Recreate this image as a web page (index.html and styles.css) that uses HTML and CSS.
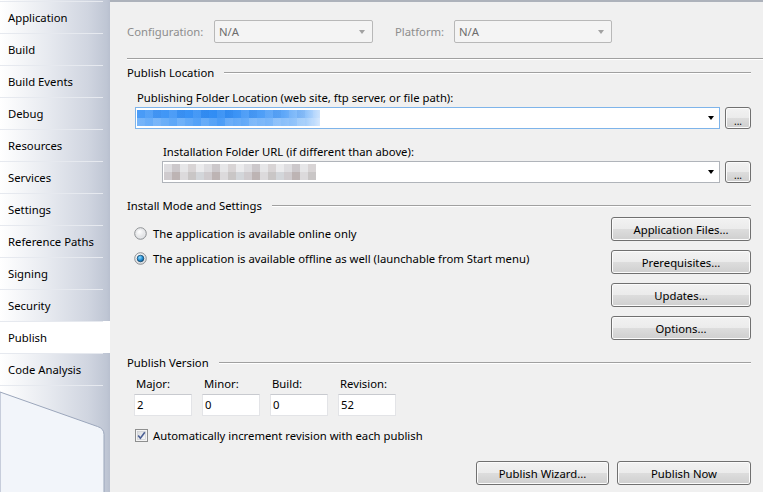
FILE: index.html
```html
<!DOCTYPE html>
<html>
<head>
<meta charset="utf-8">
<link rel="stylesheet" href="styles.css">
</head>
<body>
<div class="window">
  <nav class="sidebar">
    <div class="tab">Application</div>
    <div class="tab">Build</div>
    <div class="tab">Build Events</div>
    <div class="tab">Debug</div>
    <div class="tab">Resources</div>
    <div class="tab">Services</div>
    <div class="tab">Settings</div>
    <div class="tab">Reference Paths</div>
    <div class="tab">Signing</div>
    <div class="tab">Security</div>
    <div class="tab active">Publish</div>
    <div class="tab">Code Analysis</div>
    <div class="sidebar-foot">
      <svg class="foot-svg" width="110" height="120" viewBox="0 0 110 120">
        <path d="M0 6 L97.5 40.5 Q104 42.5 104 48.5 L104 120 L0 120 Z" fill="#f2f5fa" stroke="#9ba6bb" stroke-width="1"/>
      </svg>
    </div>
  </nav>

  <main class="content">
    <div class="config-row">
      <span class="dis-label cfg-label">Configuration:</span>
      <div class="combo disabled w159"><span>N/A</span><i class="arrow gray"></i></div>
      <span class="dis-label plat-label">Platform:</span>
      <div class="combo disabled w158"><span>N/A</span><i class="arrow gray"></i></div>
    </div>
    <div class="rule full"></div>

    <div class="group-head"><span>Publish Location</span><i class="head-line"></i></div>
    <div class="label l1">Publishing Folder Location (web site, ftp server, or file path):</div>
    <div class="combo-row r1">
      <div class="combo edit focus">
        <div class="blur-blue"><i class="bb-top"></i><i class="bb-bot"></i></div>
        <i class="arrow"></i>
      </div>
      <button class="btn dots">...</button>
    </div>
    <div class="label l2">Installation Folder URL (if different than above):</div>
    <div class="combo-row r2">
      <div class="combo edit">
        <div class="blur-gray"><i class="bg-top"></i><i class="bg-bot"></i></div>
        <i class="arrow"></i>
      </div>
      <button class="btn dots">...</button>
    </div>

    <div class="group-head h2"><span>Install Mode and Settings</span><i class="head-line"></i></div>
    <div class="install">
      <div class="radios">
        <label class="radio r-a">
          <svg width="13" height="13" viewBox="0 0 13 13"><defs><radialGradient id="rg1" cx="0.4" cy="0.35" r="0.7"><stop offset="0" stop-color="#ffffff"/><stop offset="1" stop-color="#d4d6d9"/></radialGradient></defs><circle cx="6.5" cy="6.5" r="5.8" fill="url(#rg1)" stroke="#8e9194" stroke-width="1"/><circle cx="6.5" cy="6.5" r="4.2" fill="none" stroke="#e9eaec" stroke-width="1"/></svg>
          <span>The application is available online only</span>
        </label>
        <label class="radio r-b">
          <svg width="13" height="13" viewBox="0 0 13 13"><defs><radialGradient id="rg2" cx="0.4" cy="0.35" r="0.7"><stop offset="0" stop-color="#ffffff"/><stop offset="1" stop-color="#d4d6d9"/></radialGradient><radialGradient id="dot" cx="0.4" cy="0.35" r="0.7"><stop offset="0" stop-color="#8fdcff"/><stop offset="0.6" stop-color="#1f8ad2"/><stop offset="1" stop-color="#0e4d7c"/></radialGradient></defs><circle cx="6.5" cy="6.5" r="5.8" fill="url(#rg2)" stroke="#8e9194" stroke-width="1"/><circle cx="6.5" cy="6.5" r="3.3" fill="url(#dot)" stroke="#174a6d" stroke-width="0.8"/></svg>
          <span>The application is available offline as well (launchable from Start menu)</span>
        </label>
      </div>
      <div class="side-buttons">
        <button class="btn big">Application Files...</button>
        <button class="btn big">Prerequisites...</button>
        <button class="btn big">Updates...</button>
        <button class="btn big">Options...</button>
      </div>
    </div>

    <div class="group-head h3"><span>Publish Version</span><i class="head-line"></i></div>
    <div class="version">
      <div class="vfield"><div class="vlabel">Major:</div><div class="tbox">2</div></div>
      <div class="vfield"><div class="vlabel">Minor:</div><div class="tbox">0</div></div>
      <div class="vfield"><div class="vlabel">Build:</div><div class="tbox">0</div></div>
      <div class="vfield"><div class="vlabel">Revision:</div><div class="tbox">52</div></div>
    </div>
    <label class="check">
      <svg width="13" height="13" viewBox="0 0 13 13"><defs><linearGradient id="cg" x1="0" y1="0" x2="1" y2="1"><stop offset="0" stop-color="#d8dbde"/><stop offset="1" stop-color="#f9f9fa"/></linearGradient></defs><rect x="0.5" y="0.5" width="12" height="12" fill="#f4f4f4" stroke="#8e8f8f"/><rect x="2.5" y="2.5" width="8" height="8" fill="url(#cg)" stroke="#c6c9cd" stroke-width="0.6"/><path d="M3.2 6.4 L5.4 9.2 L9.8 3.2" fill="none" stroke="#4b5f94" stroke-width="1.6"/></svg>
      <span>Automatically increment revision with each publish</span>
    </label>

    <div class="bottom-buttons">
      <button class="btn wide w-wiz">Publish Wizard...</button>
      <button class="btn wide w-now">Publish Now</button>
    </div>
  </main>
</div>
</body>
</html>
```

FILE: styles.css
```css
* { box-sizing: border-box; }
html, body { margin: 0; padding: 0; }
body {
  width: 763px;
  height: 492px;
  overflow: hidden;
  font-family: "Noto Sans", "Open Sans", sans-serif;
  font-size: 11.3px;
  color: #000;
  background: #f0f0f0;
}
.window {
  display: flex;
  width: 763px;
  height: 492px;
}

/* ---------- sidebar ---------- */
.sidebar {
  width: 110px;
  flex: 0 0 110px;
  display: flex;
  flex-direction: column;
  padding-top: 1px;
  background: linear-gradient(to right, #ffffff 0%, #e6e9ef 45%, #d0d5e0 80%, #bfc6d4 97%, #b9c0cf 100%);
}
.tab {
  height: 32px;
  padding: 1px 0 0 8px;
  line-height: 31px;
  color: #000;
  background: linear-gradient(#e6e9ef, #e6e9ef) 0 0 / 103px 1px no-repeat;
  white-space: nowrap;
}
.tab.active {
  background: linear-gradient(#e6e9ef, #e6e9ef) 0 0 / 103px 1px no-repeat, #ffffff;
}
.sidebar-foot {
  flex: 1;
  background: linear-gradient(#e6e9ef, #e6e9ef) 0 0 / 103px 1px no-repeat;
  overflow: hidden;
}
.foot-svg { display: block; margin-top: 1px; }

/* ---------- content ---------- */
.content {
  flex: 1;
  border-top: 2px solid #adb2bb;
  padding: 0 12px 0 17px;
  background: #f0f0f0;
  min-width: 0;
}
.config-row {
  display: flex;
  align-items: center;
  height: 23px;
  margin-top: 18px;
}
.dis-label { color: #8d8d8d; }
.cfg-label { width: 87px; }
.plat-label { margin-left: 22px; width: 59px; }
.combo {
  display: flex;
  align-items: center;
  height: 23px;
  border: 1px solid #adadad;
  border-radius: 2px;
  background: #fff;
  padding-left: 4px;
}
.combo.disabled {
  background: #f4f4f4;
  border-color: #b8b8b8;
  color: #6d6d6d;
}
.w159 { width: 159px; }
.w158 { width: 158px; }
.arrow {
  margin-left: auto;
  margin-right: 5px;
  width: 0;
  height: 0;
  border-left: 3.5px solid transparent;
  border-right: 3.5px solid transparent;
  border-top: 4px solid #000;
}
.arrow.gray { border-top-color: #a2a2a2; margin-right: 7px; }

.rule {
  height: 2px;
  border-top: 1px solid #a0a0a0;
  border-bottom: 1px solid #ffffff;
}
.rule.full { margin: 15px -12px 0 0; }

.group-head {
  display: flex;
  align-items: center;
  height: 16px;
  line-height: 16px;
  margin-top: 5px;
}
.head-line {
  flex: 1;
  height: 2px;
  margin-left: 10px;
  border-top: 1px solid #a0a0a0;
  border-bottom: 1px solid #ffffff;
}
.label { height: 16px; line-height: 16px; }
.l1 { margin: 9px 0 0 10px; }
.l2 { margin: 15px 0 0 36px; }

.combo-row {
  display: flex;
  align-items: center;
  margin-top: 1px;
  gap: 5px;
  height: 22px;
}
.r1 { margin-left: 8px; }
.r2 { margin-left: 35px; }
.combo.edit {
  flex: 1;
  height: 22px;
  border-radius: 0;
  border-color: #b0b4ba;
  padding-left: 1px;
}
.combo.edit.focus { border-color: #7eb4ea; }
.btn {
  font-family: inherit;
  font-size: 11.3px;
  color: #000;
  border: 1px solid #707070;
  border-radius: 3px;
  background: linear-gradient(#f2f2f2 0%, #ebebeb 50%, #dddddd 50%, #cfcfcf 100%);
  box-shadow: inset 0 0 0 1px #fbfbfb;
  padding: 0;
  margin: 0;
}
.btn.dots {
  width: 26px;
  height: 22px;
  line-height: 20px;
  padding-top: 3px;
  font-size: 10px;
}

.blur-blue {
  display: flex;
  flex-direction: column;
  width: 183px;
  height: 16px;
}
.blur-blue i { flex: 1; display: block; }
.bb-top {
  background:
    repeating-linear-gradient(to right, rgba(255,255,255,0) 0 8px, rgba(255,255,255,0.08) 8px 16px, rgba(0,60,160,0.05) 16px 24px),
    linear-gradient(to right, #4b9cf7 0%, #3e95f6 20%, #2f8cf4 45%, #4a9cf7 65%, #5ea7f8 80%, #8ec2fb 92%, #c8e0fd 100%);
}
.bb-bot {
  background:
    repeating-linear-gradient(to right, rgba(255,255,255,0.06) 0 8px, rgba(255,255,255,0) 8px 16px, rgba(255,255,255,0.12) 16px 24px),
    linear-gradient(to right, #6eb0f9 0%, #5aa6f8 25%, #4a9cf7 45%, #6fb1f9 65%, #84bcfa 80%, #9ecbfb 92%, #d6e8fe 100%);
}
.blur-gray {
  display: flex;
  flex-direction: column;
  width: 152px;
  height: 16px;
}
.blur-gray i { flex: 1; display: block; }
.bg-top {
  background: repeating-linear-gradient(to right, #dedde0 0 8px, #ccc8cb 8px 16px, #e6e6e8 16px 24px, #d8d4d5 24px 32px, #ebebed 32px 40px);
}
.bg-bot {
  background: repeating-linear-gradient(to right, #cfcbce 0 8px, #bdb4b4 8px 16px, #dcdadc 16px 24px, #c9c6c6 24px 32px, #d3d6da 32px 40px);
}

.h2 { margin-top: 15px; }
.install {
  display: flex;
  justify-content: space-between;
  height: 126px;
}
.radios { display: flex; flex-direction: column; padding-top: 11px; }
.radio {
  display: flex;
  align-items: center;
  height: 16px;
  margin-left: 7px;
  gap: 6px;
}
.radio svg { display: block; flex: 0 0 13px; }
.r-b { margin-top: 9px; }
.side-buttons {
  display: flex;
  flex-direction: column;
  gap: 9px;
  padding-top: 3px;
}
.btn.big { width: 140px; height: 24px; }

.h3 { margin-top: 15px; }
.version {
  display: flex;
  gap: 10px;
  margin: 5px 0 0 7px;
}
.vfield { width: 58px; }
.vlabel { height: 16px; line-height: 16px; padding-left: 2px; }
.tbox {
  margin-top: 2px;
  height: 22px;
  line-height: 20px;
  background: #fff;
  border: 1px solid #e3e4e7;
  border-top-color: #c8cacf;
  padding-left: 2px;
}
.check {
  display: flex;
  align-items: center;
  gap: 5px;
  height: 16px;
  margin: 11px 0 0 8px;
}
.check svg { display: block; flex: 0 0 13px; }

.bottom-buttons {
  display: flex;
  justify-content: flex-end;
  gap: 8px;
  margin-top: 18px;
}
.btn.wide { height: 24px; }
.w-wiz { width: 133px; }
.w-now { width: 134px; }
```
